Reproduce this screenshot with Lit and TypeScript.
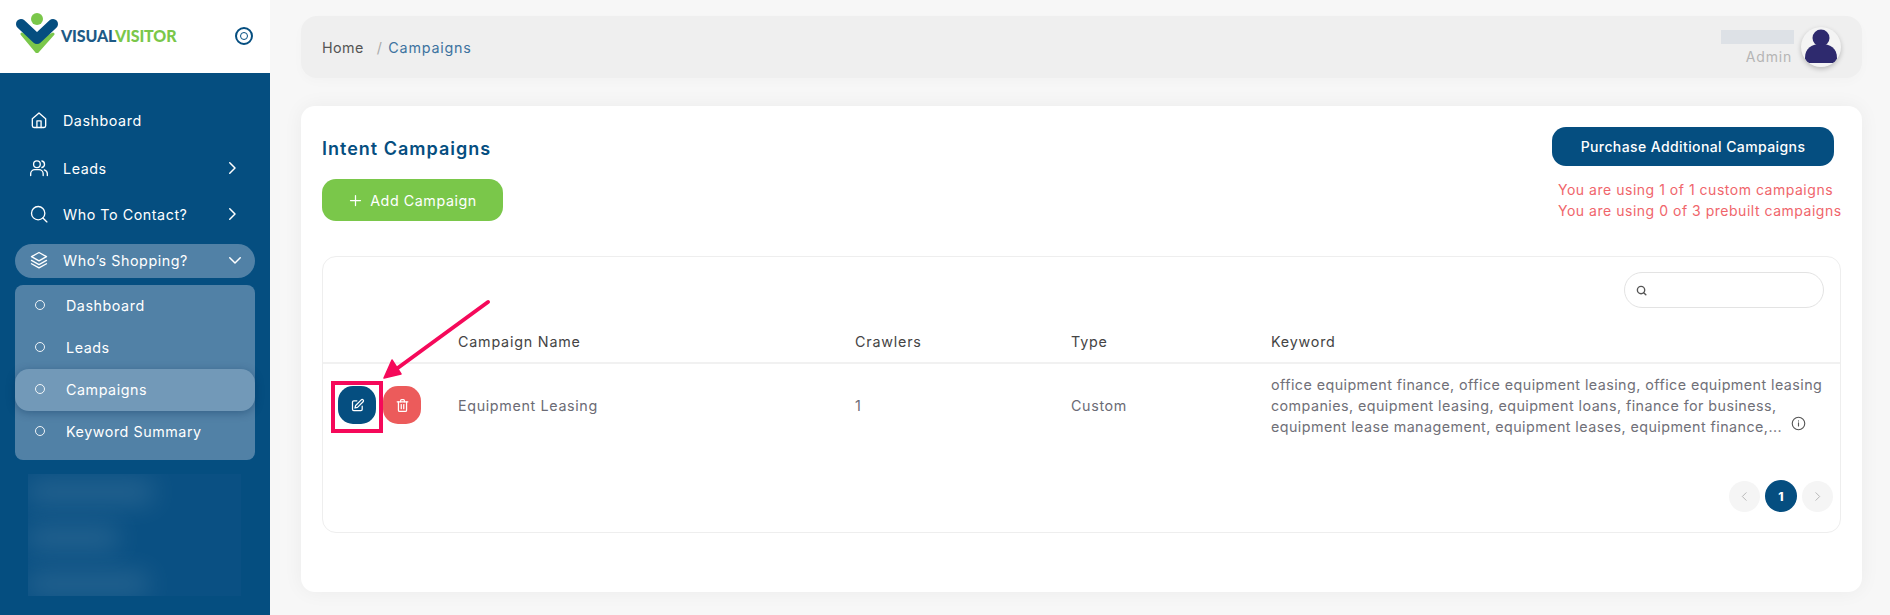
import { LitElement, html, css, svg } from "lit";
import { customElement } from "lit/decorators.js";

const ic = (body: unknown, size = 20, sw = 1.6) => html`<svg width=${size} height=${size} viewBox="0 0 24 24" fill="none" stroke="currentColor" stroke-width=${sw} stroke-linecap="round" stroke-linejoin="round">${body}</svg>`;

const home = svg`<path d="M4 10.5 12 3.5l8 7V19a2 2 0 0 1-2 2H6a2 2 0 0 1-2-2z"/><path d="M9.5 21v-8h5v8"/>`;
const users = svg`<circle cx="9.5" cy="7.5" r="4"/><path d="M2 21v-2a5 5 0 0 1 5-5h5a5 5 0 0 1 5 5v2"/><path d="M15.5 3.6a4 4 0 0 1 0 7.8"/><path d="M22 21v-2a5 5 0 0 0-3.6-4.8"/>`;
const search = svg`<circle cx="11" cy="11" r="8"/><path d="m21.5 21.5-4.8-4.8"/>`;
const layers = svg`<path d="M12 3 3 8l9 5 9-5z"/><path d="m3 12.5 9 5 9-5"/><path d="m3 16.5 9 5 9-5"/>`;
const right = svg`<path d="m9 5 7 7-7 7"/>`;
const down = svg`<path d="m5 9 7 7 7-7"/>`;
const left = svg`<path d="m15 5-7 7 7 7"/>`;
const edit = svg`<path d="M11 4.5H6a2 2 0 0 0-2 2V18a2 2 0 0 0 2 2h11.5a2 2 0 0 0 2-2v-5"/><path d="M18 3a2.1 2.1 0 0 1 3 3l-9 9-4 1 1-4z"/>`;
const trash = svg`<path d="M3.5 6h17"/><path d="M9 6V4a1.5 1.5 0 0 1 1.5-1.5h3A1.5 1.5 0 0 1 15 4v2"/><path d="M18.5 6v13.5A2 2 0 0 1 16.5 21.500h-9a2 2 0 0 1-2-2V6"/><path d="M10 10.500v6.500"/><path d="M14 10.500v6.500"/>`;
const info = svg`<circle cx="12" cy="12" r="10"/><path d="M12 16v-5"/><path d="M12 7.800v.1"/>`;

@customElement("app-root")
export class AppRoot extends LitElement {
  static styles = css`
    :host { display: block; font-family: "Inter", "Open Sans", sans-serif; }
    * { box-sizing: border-box; }
    .page { position: relative; display: flex; width: 1890px; height: 615px; overflow: hidden; background: #f7f7f7; }

    .side { width: 270px; flex: none; display: flex; flex-direction: column; background: #054e80; color: #fff; }
    .brand { height: 73px; flex: none; background: #fff; display: flex; align-items: flex-start; padding: 13px 0 0 16px; }
    .logo-text { font-family: "Lato", sans-serif; font-weight: 900; font-size: 16px; letter-spacing: -0.14px; margin: 14px 0 0 3px; line-height: 18px; color: #1d5a86; white-space: nowrap; }
    .logo-text span { color: #7ac74a; }
    .toggle { margin: 14px 17px 0 auto; width: 18px; height: 18px; border: 2px solid #054e80; border-radius: 50%; display: flex; align-items: center; justify-content: center; }
    .toggle i { width: 8px; height: 8px; border: 1.500px solid #054e80; border-radius: 50%; display: block; }

    .nav { padding: 25px 15px 0; display: flex; flex-direction: column; }
    .item { height: 46px; display: flex; align-items: center; padding: 0 0 2px 14px; font-size: 14.300px; letter-spacing: 0.55px; white-space: nowrap; }
    .item.first { margin-bottom: 2px; }
    .item > svg { flex: none; margin-right: 14px; width: 20px; height: 20px; }
    .chev { margin-left: auto; display: flex; }
    .item.open { height: 34px; margin-top: 6px; background: #5181a6; border-radius: 17px; }
    .item.open .chev { padding-right: 11px; }
    .item:not(.open) .chev { padding-right: 14px; }
    .chev svg { display: block; }
    .sub { margin-top: 7px; padding-bottom: 7px; background: #5181a6; border-radius: 8px; display: flex; flex-direction: column; }
    .sub div { height: 42px; display: flex; align-items: center; padding: 0 0 2px 20px; font-size: 14.300px; letter-spacing: 0.55px; }
    .sub i { width: 10px; height: 10px; border: 1.200px solid #fff; border-radius: 50%; margin-right: 21px; flex: none; opacity: .9; }
    .sub .active { background: #7299b8; border-radius: 14px; box-shadow: 0 2px 8px rgba(0, 40, 80, .35); }
    .blur { margin: 14px 29px 0 28px; height: 122px; background: #0a5083; overflow: hidden; display: flex; flex-direction: column; gap: 22px; padding: 6px 0 0 0; }
    .blur b { display: block; height: 24px; background: #5a88a8; opacity: .34; filter: blur(13px); }

    .main { flex: 1; padding: 16px 28px 0 31px; display: flex; flex-direction: column; min-width: 0; }
    .top { height: 62px; flex: none; background: #efefef; border-radius: 16px; display: flex; align-items: center; padding: 0 21px; font-size: 14.300px; letter-spacing: 0.42px; box-shadow: 0 4px 12px rgba(0,0,0,.018); }
    .crumb-home { color: #555; }
    .crumb-sep { color: #aaa; margin: 0 6px 0 13px; }
    .crumb-cur { color: #3d739f; letter-spacing: 0.8px; }
    .user { margin-left: auto; display: flex; align-items: center; gap: 7px; }
    .user-text { display: flex; flex-direction: column; align-items: flex-end; }
    .name { width: 73px; height: 14px; background: #dde1e6; }
    .role { color: #b5b5b5; font-size: 14px; margin: 5px 2px 0 0; letter-spacing: 0.8px; line-height: 16px; }
    .avatar { width: 40px; height: 40px; border-radius: 50%; background: #f4f4f4; box-shadow: 0 2px 5px rgba(0,0,0,.22); overflow: hidden; display: block; }

    .card { margin-top: 28px; height: 486px; background: #fff; border-radius: 14px; padding: 21px 21px 0; box-shadow: 0 0 20px rgba(0,0,0,.05); }
    .head { height: 129px; display: flex; justify-content: space-between; }
    h1 { margin: 11px 0 0; font-size: 18px; font-weight: 600; color: #054e80; letter-spacing: 1px; line-height: 22px; }
    .btn-add { margin-top: 19px; width: 181px; height: 42px; border: 0; border-radius: 14px; background: #7ac74a; color: #fff; font: inherit; font-size: 14.300px; letter-spacing: 0.55px; display: flex; align-items: center; justify-content: center; gap: 7px; }
    .head-right { display: flex; flex-direction: column; align-items: flex-start; width: 283px; }
    .btn-buy { width: 282px; height: 39px; margin-left: -6px; border: 0; border-radius: 14px; background: #054e80; color: #fff; font: inherit; font-size: 14px; font-weight: 500; letter-spacing: 0.4px; }
    .limits { margin: 13px 0 0; color: #f0656b; font-size: 14px; line-height: 21px; letter-spacing: 0.52px; white-space: nowrap; }

    .table { height: 277px; border: 1px solid #eee; border-radius: 14px; display: flex; flex-direction: column; }
    .tools { height: 71px; flex: none; display: flex; justify-content: flex-end; padding: 15px 16px 0 0; }
    .searchbox { width: 200px; height: 36px; border: 1px solid #e3e3e3; border-radius: 18px; display: flex; align-items: center; padding-left: 11px; color: #555; }
    .row { display: grid; grid-template-columns: 135px 397px 216px 200px 1fr; align-items: center; }
    .row.th { height: 36px; flex: none; border-bottom: 2px solid #f1f1f1; font-size: 14.300px; color: #444; letter-spacing: 0.8px; padding-bottom: 8px; }
    .row.td { height: 82px; flex: none; font-size: 14.300px; color: #6b6b75; letter-spacing: 0.65px; }
    .actions { display: flex; gap: 7px; padding-left: 15px; }
    .act { width: 38px; height: 38px; border: 0; border-radius: 15px; color: #fff; padding: 0; display: flex; align-items: center; justify-content: center; }
    .act.blue { background: #054e80; }
    .act.red { background: #ec5b5b; }
    .kw { line-height: 21px; white-space: nowrap; letter-spacing: 0.44px; color: #707078; }
    .info { display: inline-flex; vertical-align: 1px; margin-left: 9px; color: #555; }
    .pager { margin-top: 34px; display: flex; justify-content: flex-end; align-items: center; gap: 5px; padding-right: 7px; }
    .pg { width: 31px; height: 31px; border-radius: 50%; background: #f5f5f5; color: #aaa; display: flex; align-items: center; justify-content: center; }
    .pg.on { width: 32px; height: 32px; background: #054e80; color: #fff; font-size: 12px; font-weight: 800; }

    .mark { position: absolute; left: 331px; top: 381px; width: 52px; height: 52px; border: 4px solid #f5095a; pointer-events: none; }
    .arrow { position: absolute; left: 370px; top: 290px; pointer-events: none; }
  `;

  render() {
    return html`<div class="page">
      <aside class="side">
        <div class="brand">
          <svg width="42" height="40" viewBox="16 13 42 40" style="flex:none">
            <path d="M22 34 37 52 53 34 37 42z" fill="#7ac74a" stroke="#7ac74a" stroke-width="3" stroke-linejoin="round"/>
            <circle cx="37" cy="19" r="6" fill="#7ac74a"/>
            <path d="M21 24 37 39 53 24" fill="none" stroke="#054e80" stroke-width="10" stroke-linecap="round" stroke-linejoin="round"/>
          </svg>
          <div class="logo-text">VISUAL<span>VISITOR</span></div>
          <div class="toggle"><i></i></div>
        </div>
        <nav class="nav">
          <div class="item first">${ic(home)}Dashboard</div>
          <div class="item">${ic(users)}Leads<span class="chev">${ic(right, 18, 2)}</span></div>
          <div class="item">${ic(search)}Who To Contact?<span class="chev">${ic(right, 18, 2)}</span></div>
          <div class="item open">${ic(layers)}Who’s Shopping?<span class="chev">${ic(down, 18, 2)}</span></div>
          <div class="sub">
            <div><i></i>Dashboard</div>
            <div><i></i>Leads</div>
            <div class="active"><i></i>Campaigns</div>
            <div><i></i>Keyword Summary</div>
          </div>
        </nav>
        <div class="blur"><b style="width:125px"></b><b style="width:90px"></b><b style="width:120px"></b></div>
      </aside>

      <main class="main">
        <header class="top">
          <span class="crumb-home">Home</span><span class="crumb-sep">/</span><span class="crumb-cur">Campaigns</span>
          <div class="user">
            <div class="user-text"><span class="name"></span><span class="role">Admin</span></div>
            <svg class="avatar" viewBox="0 0 40 40">
              <circle cx="20" cy="11" r="8.500" fill="#2e2a6e"/>
              <path d="M4 31c0-10 7-14 16-14s16 4 16 14c0 3-2 5-5 5H9c-3 0-5-2-5-5z" fill="#2e2a6e"/>
            </svg>
          </div>
        </header>

        <section class="card">
          <div class="head">
            <div>
              <h1>Intent Campaigns</h1>
              <button class="btn-add">${ic(svg`<path d="M12 4v16M4 12h16"/>`, 15, 2)}Add Campaign</button>
            </div>
            <div class="head-right">
              <button class="btn-buy">Purchase Additional Campaigns</button>
              <p class="limits">You are using 1 of 1 custom campaigns<br />You are using 0 of 3 prebuilt campaigns</p>
            </div>
          </div>

          <div class="table">
            <div class="tools"><div class="searchbox">${ic(search, 11, 3)}</div></div>
            <div class="row th"><span></span><span>Campaign Name</span><span>Crawlers</span><span>Type</span><span>Keyword</span></div>
            <div class="row td">
              <div class="actions">
                <button class="act blue">${ic(edit, 15, 2)}</button>
                <button class="act red">${ic(trash, 15, 2)}</button>
              </div>
              <span>Equipment Leasing</span><span>1</span><span>Custom</span>
              <div class="kw">office equipment finance, office equipment leasing, office equipment leasing<br />companies, equipment leasing, equipment loans, finance for business,<br />equipment lease management, equipment leases, equipment finance,...<span class="info">${ic(info, 15, 1.800)}</span></div>
            </div>
            <div class="pager">
              <span class="pg">${ic(left, 13, 1.500)}</span>
              <span class="pg on">1</span>
              <span class="pg">${ic(right, 13, 1.500)}</span>
            </div>
          </div>
        </section>
      </main>

      <div class="mark"></div>
      <svg class="arrow" width="130" height="100" viewBox="370 290 130 100">
        <path d="M488 302 395 370" stroke="#f5095a" stroke-width="4" stroke-linecap="round" fill="none"/>
        <path d="M384 378 392 360 401 374z" fill="#f5095a" stroke="#f5095a" stroke-width="1.500" stroke-linejoin="round"/>
      </svg>
    </div>`;
  }
}
